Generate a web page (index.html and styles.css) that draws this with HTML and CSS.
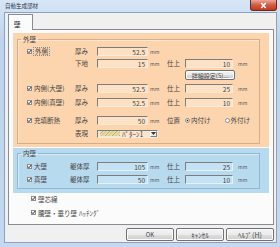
FILE: index.html
```html
<!DOCTYPE html>
<html lang="ja">

<head>
    <meta charset="utf-8">
    <title>自動生成部材</title>
    <link rel="stylesheet" href="styles.css">
</head>

<body>
    <div class="window">
        <div class="title-bar">
            <span class="title">自動生成部材</span>
            <span class="close-btn">
                <svg width="9" height="7" viewBox="0 0 9 7"><path d="M2.2 1 L6.8 6 M6.8 1 L2.2 6" stroke="#fff" stroke-width="1.5"/></svg>
            </span>
        </div>

        <div class="client">
            <div class="tabs">
                <div class="tab">壁</div>
            </div>

            <div class="tab-panel">
                <!-- 外壁 -->
                <div class="zone outer-zone">
                    <fieldset class="group">
                        <legend>外壁</legend>
                        <div class="rows">
                            <div class="row">
                                <label class="chk-label"><span class="chk"><svg viewBox="0 0 5 5"><path d="M0.8 2.4 L2 3.7 L4.2 1"/></svg></span><span class="focus">外側</span></label>
                                <span class="lbl">厚み</span>
                                <span class="field">52.5</span>
                                <span class="unit">mm</span>
                            </div>
                            <div class="row mt3">
                                <span class="lbl">下地</span>
                                <span class="field">15</span>
                                <span class="unit">mm</span>
                                <span class="lbl2">仕上</span>
                                <span class="field">10</span>
                                <span class="unit unit-r">mm</span>
                            </div>
                            <div class="row btn-row mt2">
                                <span class="btn detail-btn">詳細設定(S)...</span>
                            </div>
                            <div class="row mt4">
                                <label class="chk-label"><span class="chk"><svg viewBox="0 0 5 5"><path d="M0.8 2.4 L2 3.7 L4.2 1"/></svg></span>内側(大壁)</label>
                                <span class="lbl">厚み</span>
                                <span class="field">52.5</span>
                                <span class="unit">mm</span>
                                <span class="lbl2">仕上</span>
                                <span class="field">25</span>
                                <span class="unit unit-r">mm</span>
                            </div>
                            <div class="row mt5">
                                <label class="chk-label"><span class="chk"><svg viewBox="0 0 5 5"><path d="M0.8 2.4 L2 3.7 L4.2 1"/></svg></span>内側(真壁)</label>
                                <span class="lbl">厚み</span>
                                <span class="field">52.5</span>
                                <span class="unit">mm</span>
                                <span class="lbl2">仕上</span>
                                <span class="field">10</span>
                                <span class="unit unit-r">mm</span>
                            </div>
                            <div class="row mt9">
                                <label class="chk-label"><span class="chk"><svg viewBox="0 0 5 5"><path d="M0.8 2.4 L2 3.7 L4.2 1"/></svg></span>充填断熱</label>
                                <span class="lbl">厚み</span>
                                <span class="field">50</span>
                                <span class="unit">mm</span>
                                <span class="lbl2">位置</span>
                                <span class="radios">
                                    <label class="radio-label"><span class="radio on"></span>内付け</label>
                                    <label class="radio-label"><span class="radio"></span>外付け</label>
                                </span>
                            </div>
                            <div class="row mt4">
                                <span class="lbl">表現</span>
                                <span class="combo">
                                    <span class="hatch"></span>
                                    <span class="combo-text">ﾊﾟﾀｰﾝ1</span>
                                    <span class="combo-arrow">
                                        <svg width="5" height="3" viewBox="0 0 5 3"><path d="M0 0 H5 L2.5 3 Z" fill="#333"/></svg>
                                    </span>
                                </span>
                            </div>
                        </div>
                    </fieldset>
                </div>

                <!-- 内壁 -->
                <div class="zone inner-zone">
                    <fieldset class="group">
                        <legend>内壁</legend>
                        <div class="rows">
                            <div class="row">
                                <label class="chk-label"><span class="chk"><svg viewBox="0 0 5 5"><path d="M0.8 2.4 L2 3.7 L4.2 1"/></svg></span>大壁</label>
                                <span class="lbl">躯体厚</span>
                                <span class="field">105</span>
                                <span class="unit">mm</span>
                                <span class="lbl2">仕上</span>
                                <span class="field">25</span>
                                <span class="unit unit-r">mm</span>
                            </div>
                            <div class="row mt4">
                                <label class="chk-label"><span class="chk"><svg viewBox="0 0 5 5"><path d="M0.8 2.4 L2 3.7 L4.2 1"/></svg></span>真壁</label>
                                <span class="lbl">躯体厚</span>
                                <span class="field">50</span>
                                <span class="unit">mm</span>
                                <span class="lbl2">仕上</span>
                                <span class="field">10</span>
                                <span class="unit unit-r">mm</span>
                            </div>
                        </div>
                    </fieldset>
                </div>

                <div class="opts">
                    <label class="chk-label"><span class="chk"><svg viewBox="0 0 5 5"><path d="M0.8 2.4 L2 3.7 L4.2 1"/></svg></span>壁芯線</label>
                    <label class="chk-label"><span class="chk"><svg viewBox="0 0 5 5"><path d="M0.8 2.4 L2 3.7 L4.2 1"/></svg></span>腰壁・垂り壁<span class="kana">ﾊｯﾁﾝｸﾞ</span></label>
                </div>
            </div>

            <div class="buttons">
                <span class="btn">OK</span>
                <span class="btn kana">ｷｬﾝｾﾙ</span>
                <span class="btn kana">ﾍﾙﾌﾟ(H)</span>
            </div>
        </div>
    </div>
</body>

</html>
```

FILE: styles.css
```css
* {
    box-sizing: border-box;
}

body {
    margin: 0px;
    font-family: "Noto Sans CJK JP", sans-serif;
    font-size: 6.5px;
    color: #454545;
}

.window {
    width: 280px;
    height: 247px;
    background: linear-gradient(#d7e6f6, #bed4ec 40px, #c4d9ef);
    display: flex;
    flex-direction: column;
}

.title-bar {
    height: 12px;
    display: flex;
    justify-content: space-between;
    align-items: center;
    padding-left: 5px;
}

.title {
    font-size: 5.5px;
    color: #1e2f45;
}

.close-btn {
    align-self: flex-start;
    width: 27px;
    height: 11px;
    margin-right: 3px;
    display: flex;
    align-items: center;
    justify-content: center;
    background: linear-gradient(#e9a898, #d45a43 50%, #c13a20);
    border: 1px solid #6e2a1f;
    border-top: none;
    border-radius: 0px 0px 3px 3px;
}

.client {
    margin: 0px 3px 0px 4px;
    height: 231px;
    border: 1px solid #8aa2bd;
    background: #f0f0f0;
}

.tabs {
    height: 16px;
    padding-left: 3px;
    display: flex;
    align-items: flex-end;
}

.tab {
    position: relative;
    z-index: 1;
    width: 25px;
    height: 16px;
    margin-bottom: -1px;
    padding: 5px 0px 0px 5px;
    line-height: 8px;
    color: #222;
    background: #fbfbfb;
    border: 1px solid #898c95;
    border-bottom: none;
}

.tab-panel {
    height: 196px;
    margin: 0px 2px 0px 3px;
    padding: 3px 4px 0px;
    border: 1px solid #898c95;
    background: #fbfbfb;
}

.zone {
    padding: 2px 9px 3px 4px;
}

.outer-zone {
    background: #fcd4ae;
}

.inner-zone {
    margin-top: 1px;
    padding-top: 1px;
    padding-bottom: 4px;
    background: #b8daee;
}

.group {
    margin: 0px;
    padding: 0px 0px 5px 3px;
    min-width: 0px;
    border: 1px solid #d4ad89;
    box-shadow: inset 1px 1px 0px #fde5cf;
}

.inner-zone .group {
    padding-bottom: 4px;
    border-color: #8fb8d3;
    box-shadow: inset 1px 1px 0px #d6ebf7;
}

.group legend {
    padding: 0px 2px;
    line-height: 8px;
}

.rows {
    display: flex;
    flex-direction: column;
    margin-left: 6px;
    padding-top: 4px;
}

.inner-zone .rows {
    padding-top: 5px;
}

.row {
    display: grid;
    grid-template-columns: 43px 27px 51px 19px 18px 48px auto;
    height: 9px;
    align-items: center;
    line-height: 9px;
    white-space: nowrap;
}

.mt2 { margin-top: 2px; }
.mt3 { margin-top: 3px; }
.mt4 { margin-top: 4px; }
.mt5 { margin-top: 5px; }
.mt9 { margin-top: 9px; }

.btn-row {
    height: 10px;
}

.chk-label {
    display: flex;
    align-items: center;
    gap: 2px;
    white-space: nowrap;
}

.chk {
    width: 5px;
    height: 5px;
    border: 1px solid #8e8f8f;
    background: #fff;
    display: flex;
}

.chk svg {
    width: 5px;
    height: 5px;
    margin: -1px;
    fill: none;
    stroke: #2a2a2a;
    stroke-width: 1;
}

.focus {
    outline: 1px dotted #888;
    outline-offset: 0px;
    padding: 0px 1px;
    line-height: 7px;
}

.kana {
    font-size: 7px;
}

.lbl {
    grid-column: 2;
    text-align: right;
    padding-right: 9px;
}

.field {
    height: 9px;
    padding-right: 2px;
    text-align: right;
    line-height: 8px;
    background: #fde1c5;
    border: 1px solid #f6ead9;
    border-top-color: #7d7d7d;
    border-left-color: #7d7d7d;
}

.inner-zone .field {
    background: #c4e2f3;
    border-color: #e2f1fa;
    border-top-color: #7d7d7d;
    border-left-color: #7d7d7d;
}

.unit {
    padding-left: 2px;
    font-size: 5px;
    color: #555;
}

.unit-r {
    padding-left: 5px;
}

.btn {
    display: flex;
    align-items: center;
    justify-content: center;
    border: 1px solid #707070;
    border-radius: 2px;
    background: linear-gradient(#f4f4f4, #ebebeb 50%, #dddddd 51%, #cfcfcf);
    box-shadow: inset 0px 0px 0px 1px #fbfbfb;
    white-space: nowrap;
}

.detail-btn {
    grid-column: 6;
    width: 50px;
    height: 10px;
    font-size: 6px;
}

.lbl2 {
    grid-column: 5;
}

.radios {
    grid-column: 6 / span 2;
    display: flex;
    gap: 14px;
}

.radio-label {
    display: flex;
    align-items: center;
    gap: 1px;
}

.radio {
    width: 5px;
    height: 5px;
    border: 1px solid #8e8f8f;
    border-radius: 50%;
    background: #fff;
}

.radio.on {
    background: radial-gradient(circle, #2a2a2a 40%, #fff 50%);
}

.combo {
    grid-column: 3 / span 3;
    width: 61px;
    height: 8px;
    display: flex;
    align-items: center;
    padding-left: 2px;
    background: #fde4cc;
    border: 1px solid #f6ead9;
    border-top-color: #7d7d7d;
    border-left-color: #7d7d7d;
}

.hatch {
    width: 20px;
    height: 5px;
    background: repeating-linear-gradient(135deg, #e9df9c 0px, #e9df9c 1.5px, #a9a48c 2px, #e9df9c 2.5px);
}

.combo-text {
    margin-left: 2px;
    font-size: 7px;
    line-height: 6px;
}

.combo-arrow {
    margin-left: auto;
    width: 7px;
    height: 6px;
    display: flex;
    align-items: center;
    justify-content: center;
    background: #ececec;
    border: 1px solid #fff;
    border-right-color: #7d7d7d;
    border-bottom-color: #7d7d7d;
}

.opts {
    display: flex;
    flex-direction: column;
    gap: 5px;
    margin-top: 1px;
    padding-left: 18px;
}

.opts .chk-label {
    height: 9px;
}

.buttons {
    display: flex;
    justify-content: flex-end;
    gap: 2px;
    margin: 3px 2px 0px 0px;
}

.buttons .btn {
    width: 48px;
    height: 13px;
    font-size: 6px;
}

.buttons .kana {
    font-size: 7px;
}
```
